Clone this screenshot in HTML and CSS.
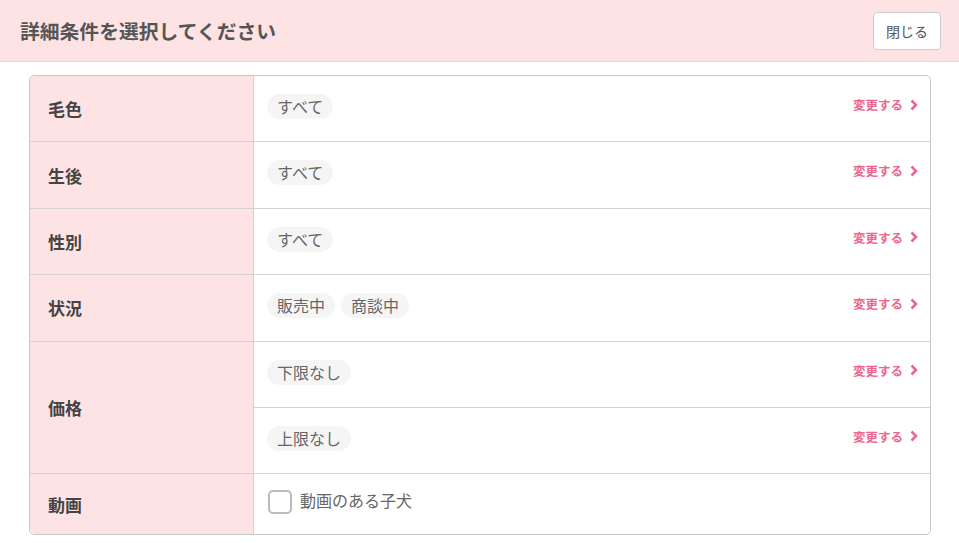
FILE: index.html
```html
<!DOCTYPE html>
<html lang="ja">
<head>
  <meta charset="UTF-8" />
  <meta name="viewport" content="width=device-width, initial-scale=1.0" />
  <title>詳細条件を選択してください</title>
  <link rel="stylesheet" href="styles.css">
</head>
<body>
  <header class="modal-head">
    <h1>詳細条件を選択してください</h1>
    <button class="close-btn" type="button">閉じる</button>
  </header>

  <div class="cond">
    <div class="cond-row">
      <div class="cond-label">毛色</div>
      <div class="cond-values">
        <div class="cond-value">
          <div class="chips"><span class="chip">すべて</span></div>
          <a class="change" href="#">変更する<svg width="8" height="12" viewBox="0 0 8 12"><polyline points="1.5,1.5 6,6 1.5,10.5" /></svg></a>
        </div>
      </div>
    </div>

    <div class="cond-row">
      <div class="cond-label">生後</div>
      <div class="cond-values">
        <div class="cond-value">
          <div class="chips"><span class="chip">すべて</span></div>
          <a class="change" href="#">変更する<svg width="8" height="12" viewBox="0 0 8 12"><polyline points="1.5,1.5 6,6 1.5,10.5" /></svg></a>
        </div>
      </div>
    </div>

    <div class="cond-row">
      <div class="cond-label">性別</div>
      <div class="cond-values">
        <div class="cond-value">
          <div class="chips"><span class="chip">すべて</span></div>
          <a class="change" href="#">変更する<svg width="8" height="12" viewBox="0 0 8 12"><polyline points="1.5,1.5 6,6 1.5,10.5" /></svg></a>
        </div>
      </div>
    </div>

    <div class="cond-row">
      <div class="cond-label">状況</div>
      <div class="cond-values">
        <div class="cond-value">
          <div class="chips"><span class="chip">販売中</span><span class="chip">商談中</span></div>
          <a class="change" href="#">変更する<svg width="8" height="12" viewBox="0 0 8 12"><polyline points="1.5,1.5 6,6 1.5,10.5" /></svg></a>
        </div>
      </div>
    </div>

    <div class="cond-row">
      <div class="cond-label">価格</div>
      <div class="cond-values">
        <div class="cond-value">
          <div class="chips"><span class="chip">下限なし</span></div>
          <a class="change" href="#">変更する<svg width="8" height="12" viewBox="0 0 8 12"><polyline points="1.5,1.5 6,6 1.5,10.5" /></svg></a>
        </div>
        <div class="cond-value">
          <div class="chips"><span class="chip">上限なし</span></div>
          <a class="change" href="#">変更する<svg width="8" height="12" viewBox="0 0 8 12"><polyline points="1.5,1.5 6,6 1.5,10.5" /></svg></a>
        </div>
      </div>
    </div>

    <div class="cond-row last">
      <div class="cond-label">動画</div>
      <div class="cond-values">
        <label class="cond-value check">
          <span class="checkbox"></span>
          <span class="check-text">動画のある子犬</span>
        </label>
      </div>
    </div>
  </div>
</body>
</html>
```

FILE: styles.css
```css
:root {
  --pink-bg: #fde3e3;
  --pink-text: #f0658c;
  --line: #d2d2d2;
  --text: #555;
  --row-h: 66.4px;
}
body {
  margin: 0;
  font-family: "Noto Sans CJK JP", "Noto Sans", sans-serif;
  color: var(--text);
  background: #fff;
}
.modal-head {
  display: flex;
  align-items: center;
  justify-content: space-between;
  height: 61px;
  padding: 0 18px 0 20px;
  background: var(--pink-bg);
  border-bottom: 1px solid #ddd;
}
.modal-head h1 {
  margin: 0;
  font-size: 19.8px;
  font-weight: bold;
  color: #555;
}
.close-btn {
  width: 68px;
  height: 38px;
  padding: 0;
  background: #fff;
  border: 1px solid #ccc;
  border-radius: 4px;
  font-family: inherit;
  font-size: 14px;
  color: #555;
}
.cond {
  margin: 13px 28px 0 29px;
  border: 1px solid #c8c8c8;
  border-radius: 5px;
  overflow: hidden;
}
.cond-row {
  display: grid;
  grid-template-columns: 224px 1fr;
  border-bottom: 1px solid var(--line);
}
.cond-row.last {
  border-bottom: none;
}
.cond-label {
  display: flex;
  align-items: center;
  padding-left: 18px;
  background: var(--pink-bg);
  border-right: 1px solid var(--line);
  font-size: 17px;
  font-weight: bold;
  color: #444;
}
.cond-value {
  box-sizing: border-box;
  display: flex;
  justify-content: space-between;
  align-items: flex-start;
  height: calc(var(--row-h) - 1px);
  padding: 18px 12px 0 13px;
}
.cond-value + .cond-value {
  height: var(--row-h);
  border-top: 1px solid var(--line);
}
.chips {
  display: flex;
  gap: 6px;
}
.chip {
  display: inline-block;
  height: 25px;
  padding: 0 10px;
  line-height: 25px;
  font-size: 16px;
  color: #666;
  background: #f5f5f5;
  border-radius: 13px;
}
.change {
  display: flex;
  align-items: center;
  gap: 7px;
  margin-top: 1px;
  font-size: 12.5px;
  font-weight: bold;
  color: var(--pink-text);
  text-decoration: none;
}
.change svg {
  fill: none;
  stroke: var(--pink-text);
  stroke-width: 2.6;
}
.check {
  height: 60px;
  justify-content: flex-start;
  align-items: center;
  gap: 8px;
  padding: 0 0 5px 14px;
}
.checkbox {
  box-sizing: border-box;
  width: 24px;
  height: 24px;
  border: 2px solid #bbb;
  border-radius: 5px;
  background: #fff;
}
.check-text {
  font-size: 16px;
  color: #666;
  margin-top: -3px;
}
```
